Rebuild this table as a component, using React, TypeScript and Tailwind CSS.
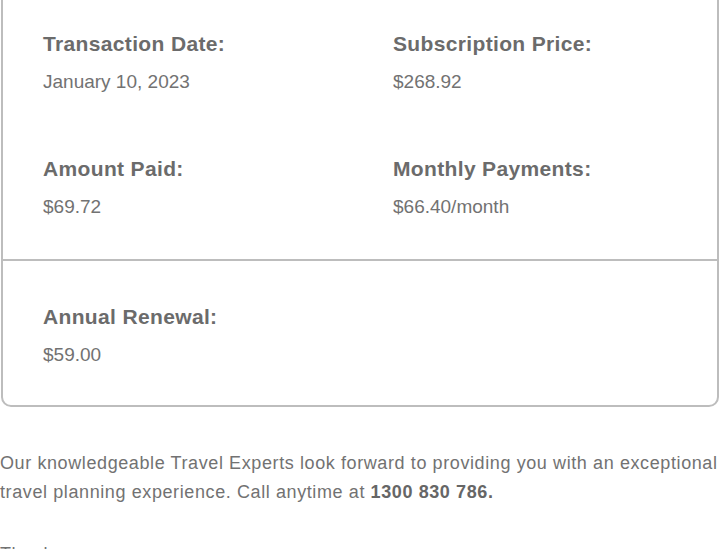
function Field({ label, value }: { label: string; value: string }) {
  return (
    <div>
      <h3 className="text-[21px] leading-[28px] font-bold tracking-[0.35px] text-[#6b6b6b]">{label}</h3>
      <p className="mt-[10px] text-[19px] leading-[28px] text-[#727272]">{value}</p>
    </div>
  )
}

export default function App() {
  return (
    <div className="bg-white min-h-screen overflow-hidden font-['Liberation_Sans',Arial,sans-serif]">
      <div className="-mt-[12px] mx-[1px] border-2 border-[#bdbdbd] rounded-[10px] bg-white">
        <div className="pt-[40px] pb-[38px] pl-[40px] grid grid-cols-[350px_1fr] gap-y-[59px]">
          <Field label="Transaction Date:" value="January 10, 2023" />
          <Field label="Subscription Price:" value="$268.92" />
          <Field label="Amount Paid:" value="$69.72" />
          <Field label="Monthly Payments:" value="$66.40/month" />
        </div>
        <div className="border-t-2 border-[#bdbdbd] pt-[42px] pb-[36px] pl-[40px]">
          <Field label="Annual Renewal:" value="$59.00" />
        </div>
      </div>

      <p className="mt-[42px] text-[18px] leading-[29px] tracking-[0.6px] text-[#727272] whitespace-nowrap">
        Our knowledgeable Travel Experts look forward to providing you with an exceptional
        <br />
        travel planning experience. Call anytime at <strong className="font-bold text-[#666666]">1300 830 786.</strong>
      </p>
      <p className="mt-[33px] text-[18px] leading-[29px] tracking-[0.6px] text-[#727272]">Thank you,</p>
    </div>
  )
}
